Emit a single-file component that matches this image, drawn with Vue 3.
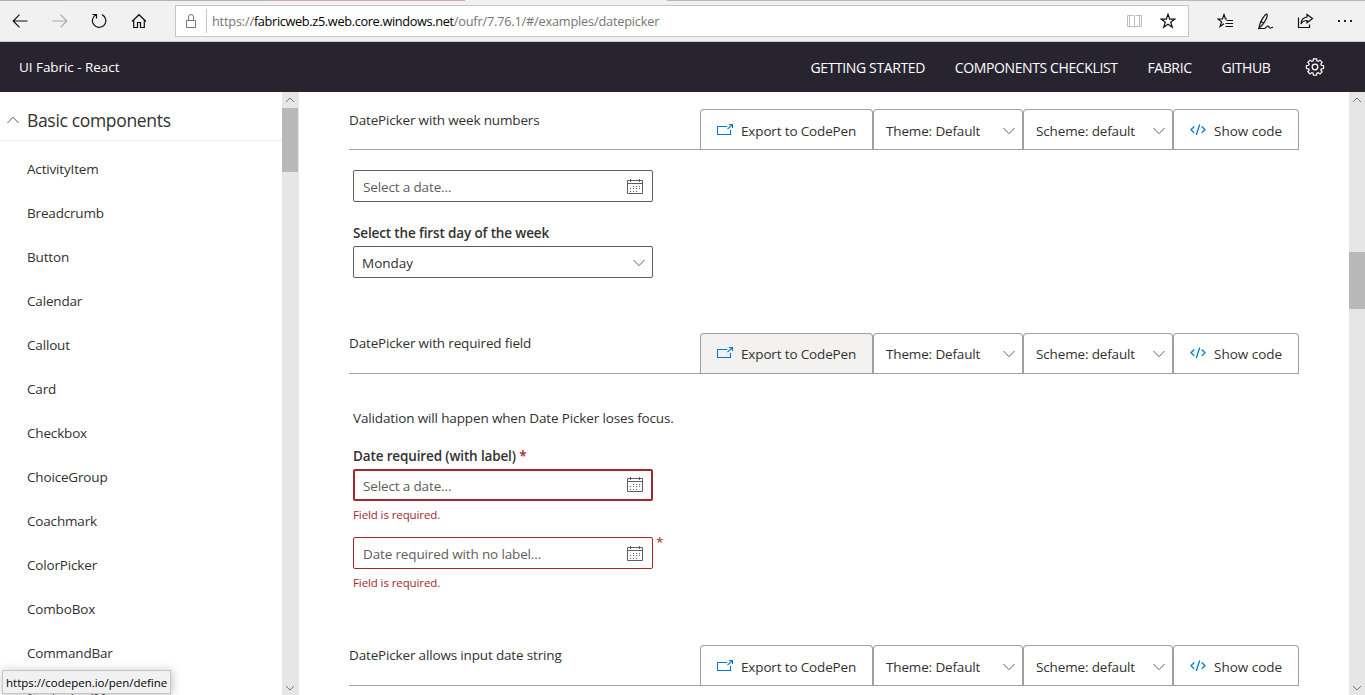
<template>
  <div class="window">
    <div class="tab-strip"></div>
    <div class="browser-bar">
      <div class="nav-buttons">
        <svg width="16" height="16" viewBox="0 0 16 16" class="ink"><path d="M15.500 8H1.200M7.500 1.700L1.200 8l6.300 6.300" /></svg>
        <svg width="16" height="16" viewBox="0 0 16 16" class="ink faded"><path d="M.5 8h14.300M8.500 1.700L14.800 8l-6.300 6.300" /></svg>
        <svg width="16" height="16" viewBox="0 0 16 16" class="ink"><path d="M11 1.600A6.700 6.700 0 1 1 5 1.700M1.500 1.500H5.500V5.500" /></svg>
        <svg width="16" height="16" viewBox="0 0 16 16" class="ink"><path d="M1 8.500L8 1.700l7 6.800M2.700 7v7.500h3.800V9.500h3v5h3.800V7" /></svg>
      </div>
      <div class="address">
        <svg width="12" height="16" viewBox="0 0 12 16" class="lock"><path d="M1.500 7.500h9v7h-9zM3.500 7.500V4a2.500 2.500 0 0 1 5 0v3.500" /></svg>
        <span class="divider"></span>
        <span class="url">https://<b>fabricweb.z5.web.core.windows.net</b>/oufr/7.76.1/#/examples/datepicker</span>
        <svg width="16" height="16" viewBox="0 0 16 16" class="reader"><path d="M.5 2.500H6.500L7.500 3.500L8.500 2.500H14.500V13.500H8.500L7.500 14.500L6.500 13.500H.5zM7.500 3.500V14M2.500 2.500v11M12.500 2.500v11" /></svg>
        <svg width="16" height="16" viewBox="0 0 16 16" class="ink star"><path d="M8 1.300l1.700 4.800h5.200l-4.200 3.100 1.600 5L8 11.200l-4.300 3 1.600-5L1.100 6.100h5.200z" /></svg>
      </div>
      <div class="tools">
        <svg width="17" height="16" viewBox="0 0 17 16" class="ink"><path d="M10 6H8.500L7 1.500 5.500 6H.9l3.700 2.900-1.500 4.600L7 10.800M9.500 7.500H16M8.500 10.500H16M8.500 13.500H16" /></svg>
        <svg width="17" height="17" viewBox="0 0 17 17" class="ink"><path d="M9.800 1.200C8 1 3.500 8.300 2.500 12.300L2 15l2-1.700C7 11 11.500 3 9.800 1.200zM4.500 8.700l2.200 1.500M1 15.500h6c2 0 2.500-2.500 4-2.500s.5 2 2 2 1.500-.8 3-.5" /></svg>
        <svg width="17" height="16" viewBox="0 0 17 16" class="ink"><path d="M1.500 4.500v10h11v-3M10 1.500l5.500 4-5.500 4.300V7.500c-3 0-4.800 1.200-6 3.500.2-4 2.500-6.500 6-7z" /></svg>
        <svg width="16" height="16" viewBox="0 0 16 16" class="dots"><path d="M1 7h2v2H1zM7 7h2v2H7zM13 7h2v2h-2z" /></svg>
      </div>
    </div>

    <header class="site-header">
      <span class="brand">UI Fabric - React</span>
      <nav>
        <a v-for="link in links" :key="link">{{ link }}</a>
      </nav>
      <svg class="gear" width="20" height="20" viewBox="0 0 20 20">
        <path d="M8.400 1.600h3.200l.4 2.300 1.400.6 1.900-1.400 2.300 2.300-1.400 1.900.6 1.400 2.300.4v3.200l-2.300.4-.6 1.400 1.400 1.900-2.300 2.300-1.900-1.400-1.400.6-.4 2.300H8.400l-.4-2.300-1.400-.6-1.900 1.400L2.400 16l1.400-1.900-.6-1.400-2.300-.4V9.100l2.300-.4.6-1.400-1.400-1.900 2.300-2.300 1.900 1.400L8 3.900z" transform="translate(.6 .4) scale(.94 .9)" />
        <circle cx="10" cy="10" r="2.800" />
      </svg>
    </header>

    <div class="body">
      <aside>
        <div class="side-content">
          <div class="group">
            <svg width="12" height="8" viewBox="0 0 12 8"><path d="M.5 7L6 1.200 11.500 7" /></svg>
            <span>Basic components</span>
          </div>
          <ul>
            <li v-for="item in components" :key="item">{{ item }}</li>
          </ul>
        </div>
        <div class="scrollbar side-scroll">
          <svg width="10" height="6" viewBox="0 0 10 6"><path d="M1 5l4-4 4 4" /></svg>
          <div class="thumb"></div>
          <svg width="10" height="6" viewBox="0 0 10 6"><path d="M1 1l4 4 4-4" /></svg>
        </div>
      </aside>

      <main>
        <section v-for="example in examples" :key="example.id" :class="example.id">
          <div class="example-head">
            <h3>{{ example.title }}</h3>
            <div class="commands">
              <button class="export" :class="{ hovered: example.hovered }">
                <svg width="16" height="12" viewBox="0 0 16 12"><path d="M10 2.500H.5v8h13V6M10.500 5.200l4.500-4.200M12 .5h3.500V4" /></svg>
                Export to CodePen
              </button>
              <button class="select">
                Theme: Default
                <svg width="12" height="8" viewBox="0 0 12 8"><path d="M.5 1L6 6.700 11.500 1" /></svg>
              </button>
              <button class="select">
                Scheme: default
                <svg width="12" height="8" viewBox="0 0 12 8"><path d="M.5 1L6 6.700 11.500 1" /></svg>
              </button>
              <button class="code">
                <svg width="16" height="12" viewBox="0 0 16 12"><path d="M4.300 2.500L1 5.700l3.300 3.200M11.700 2.500L15 5.700l-3.300 3.200M9.700.5L6.300 11" /></svg>
                Show code
              </button>
            </div>
          </div>
          <div v-if="example.fields" class="example-body">
            <p v-if="example.intro" class="intro">{{ example.intro }}</p>
            <div v-for="field in example.fields" :key="field.text" class="field" :class="field.state">
              <label v-if="field.label">{{ field.label }}<i v-if="field.state"> *</i></label>
              <div class="box" :class="field.type">
                <span>{{ field.text }}</span>
                <svg v-if="field.type === 'date'" width="16" height="16" viewBox="0 0 16 16" class="calendar">
                  <path d="M.5 1.500h15v13H.5zM.5 4.500h15M3.500 0v3M12.500 0v3" />
                  <path class="days" d="M6 7.500h7M3 9.500h10M3 12.500h7" />
                </svg>
                <svg v-else width="12" height="8" viewBox="0 0 12 8"><path d="M.5 1L6 6.700 11.500 1" /></svg>
              </div>
              <i v-if="field.state === 'invalid'" class="star-mark">*</i>
              <p v-if="field.state" class="error">Field is required.</p>
            </div>
          </div>
        </section>
      </main>
      <div class="scrollbar page-scroll">
        <svg width="10" height="6" viewBox="0 0 10 6"><path d="M1 5l4-4 4 4" /></svg>
        <div class="thumb"></div>
        <svg width="10" height="6" viewBox="0 0 10 6"><path d="M1 1l4 4 4-4" /></svg>
      </div>
    </div>
    <div class="status">https://codepen.io/pen/define</div>
  </div>
</template>

<script setup>
import { ref } from "vue";

const links = ref(["GETTING STARTED", "COMPONENTS CHECKLIST", "FABRIC", "GITHUB"]);

const components = ref([
  "ActivityItem",
  "Breadcrumb",
  "Button",
  "Calendar",
  "Callout",
  "Card",
  "Checkbox",
  "ChoiceGroup",
  "Coachmark",
  "ColorPicker",
  "ComboBox",
  "CommandBar",
  "ContextualMenu",
]);

const examples = ref([
  {
    id: "weeks",
    title: "DatePicker with week numbers",
    fields: [
      { type: "date", text: "Select a date..." },
      { type: "dropdown", label: "Select the first day of the week", text: "Monday" },
    ],
  },
  {
    id: "required",
    title: "DatePicker with required field",
    hovered: true,
    intro: "Validation will happen when Date Picker loses focus.",
    fields: [
      { type: "date", label: "Date required (with label)", text: "Select a date...", state: "focused" },
      { type: "date", text: "Date required with no label...", state: "invalid" },
    ],
  },
  { id: "input", title: "DatePicker allows input date string" },
]);
</script>

<style>
body {
  overflow: hidden;
}
</style>

<style scoped>
* {
  box-sizing: border-box;
}
.window {
  position: relative;
  display: flex;
  flex-direction: column;
  width: 1365px;
  height: 695px;
  overflow: hidden;
  background: #fff;
  color: #323130;
  font: 13.5px/20px "Open Sans", "Noto Sans", sans-serif;
}
svg {
  display: block;
  flex: none;
  fill: none;
  stroke: #605e5c;
  stroke-width: 1;
}
.tab-strip {
  flex: none;
  height: 1px;
  background: linear-gradient(90deg, #aab4b8 0 63px, #b4b4b4 63px 264px, #cfa9ae 264px 465px, #f1f1f1 465px 667px, #b8b8b8 667px);
}
.browser-bar {
  display: flex;
  flex: none;
  align-items: center;
  height: 41px;
  padding: 0 12px 0 12px;
  background: #f1f1f1;
  border-bottom: 1px solid #ccc;
}
.nav-buttons {
  display: flex;
  gap: 23.6px;
  width: 163px;
}
.ink {
  stroke: #111;
  stroke-width: 1.2;
}
.faded {
  stroke: #aaa;
}
.address {
  display: flex;
  align-items: center;
  width: 1014px;
  height: 32px;
  padding: 0 12px 0 9px;
  background: #fff;
  border: 1px solid #c6c6c6;
}
.lock {
  stroke: #777;
}
.divider {
  width: 1px;
  height: 24px;
  margin: 0 5px 0 9px;
  background: #c6c6c6;
}
.url {
  flex: 1;
  color: #757575;
  font-size: 12.75px;
  letter-spacing: -0.2px;
}
.url b {
  color: #000;
  font-weight: 400;
  letter-spacing: -0.35px;
}
.reader {
  margin-right: 17px;
  stroke: #bbb;
}
.tools {
  display: flex;
  justify-content: space-between;
  flex: 1;
  margin-left: 28px;
}
.dots {
  fill: #222;
  stroke: none;
}
.site-header {
  display: flex;
  flex: none;
  align-items: center;
  height: 50px;
  padding: 0 40px 0 19px;
  background: #27242f;
  color: #fff;
}
.brand {
  flex: 1;
  letter-spacing: -0.05px;
}
nav {
  display: flex;
  gap: 29.8px;
  margin: 1px 34.5px 0 0;
  font-size: 14px;
  letter-spacing: -0.38px;
}
.gear {
  stroke: #fff;
  stroke-width: 1.3;
}
.body {
  display: flex;
  flex: 1;
  min-height: 0;
}
aside {
  display: flex;
  width: 299px;
}
.side-content {
  flex: 1;
  overflow: hidden;
}
.group {
  display: flex;
  align-items: center;
  gap: 8px;
  height: 49px;
  padding: 8px 0 0 7px;
  border-bottom: 1px solid #eaeaea;
  font-size: 17.5px;
  letter-spacing: -0.33px;
}
ul {
  margin: 0;
  padding: 6px 0 0 27px;
  list-style: none;
}
li {
  height: 44px;
  letter-spacing: -0.17px;
  line-height: 44px;
}
.scrollbar {
  display: flex;
  flex-direction: column;
  align-items: center;
  width: 16px;
  padding: 5px 0 4px;
  background: #e6e6e6;
}
.scrollbar svg {
  stroke: #777;
}
.scrollbar .thumb {
  width: 100%;
  background: #b8b8b8;
}
.scrollbar svg:last-child {
  margin-top: auto;
}
.side-scroll {
  width: 17px;
  padding-right: 1px;
}
.side-scroll .thumb {
  height: 64px;
  margin-top: 5px;
}
.page-scroll .thumb {
  height: 57px;
  margin-top: 149px;
}
main {
  flex: 1;
  padding: 17px 50px 0;
  overflow: hidden;
  letter-spacing: -0.14px;
}
.weeks {
  height: 224px;
}
.required {
  height: 312px;
}
.example-head {
  display: flex;
  height: 41px;
  border-bottom: 1px solid #a19f9d;
}
h3 {
  flex: 1;
  margin: 1px 0 0;
  font-size: inherit;
  font-weight: 400;
  letter-spacing: -0.16px;
}
.commands {
  display: flex;
  width: 599px;
}
button {
  display: flex;
  align-items: center;
  padding: 2px 16px 0;
  border: 1px solid #a19f9d;
  border-bottom: 0;
  border-radius: 4px 4px 0 0;
  background: #fff;
  color: #323130;
  font: inherit;
  letter-spacing: -0.15px;
  white-space: nowrap;
}
.required h3,
.input h3 {
  margin-top: 0;
}
.required button {
  padding-top: 0;
}
button.export {
  width: 173px;
  gap: 8px;
}
button.hovered {
  background: #f3f2f1;
}
button.export svg,
button.code svg {
  stroke: #0078d4;
  stroke-width: 1.1;
}
button.export svg {
  margin-top: -2px;
}
button.code svg {
  margin-top: -1px;
  stroke-width: 1.3;
}
button.select {
  justify-content: space-between;
  width: 150px;
  padding-right: 7px;
  padding-left: 12px;
}
button.code {
  width: 126px;
  gap: 8px;
  letter-spacing: 0;
}
.example-body {
  padding: 20px 4px 0;
}
.intro {
  margin: 14px 0 18px;
}
.field {
  position: relative;
  width: 300px;
}
.field label {
  display: block;
  height: 23px;
  font-weight: 600;
}
.weeks .field + .field {
  margin-top: 21px;
}
.required .field + .field {
  margin-top: 12px;
}
i {
  color: #a4262c;
  font-style: normal;
}
.box {
  display: flex;
  align-items: center;
  justify-content: space-between;
  height: 32px;
  padding: 2px 9px 0;
  border: 1px solid #605e5c;
  border-radius: 2px;
}
.box.date {
  color: #605e5c;
}
.box.dropdown {
  padding: 2px 7px 0 8px;
  letter-spacing: 0;
}
.calendar {
  margin-top: -1px;
}
.days {
  stroke-dasharray: 1 2;
}
.focused .box {
  padding: 1px 8px 0;
  border: 2px solid #a4262c;
}
.invalid .box {
  border-color: #a4262c;
}
.star-mark {
  position: absolute;
  top: -5px;
  left: 303px;
}
.error {
  height: 24px;
  margin: 0;
  padding-top: 4px;
  color: #a4262c;
  font-size: 11.5px;
  letter-spacing: -0.1px;
}
/* link preview shown over the page corner */
.status {
  position: absolute;
  bottom: 1px;
  left: 2px;
  width: 169px;
  height: 24px;
  padding-left: 3px;
  border: 1px solid #c6c6c6;
  background: #f1f1f1;
  box-shadow: 1px 1px 10px rgba(0, 0, 0, 0.25);
  color: #000;
  font-size: 11.5px;
  line-height: 23px;
  white-space: nowrap;
}
</style>
